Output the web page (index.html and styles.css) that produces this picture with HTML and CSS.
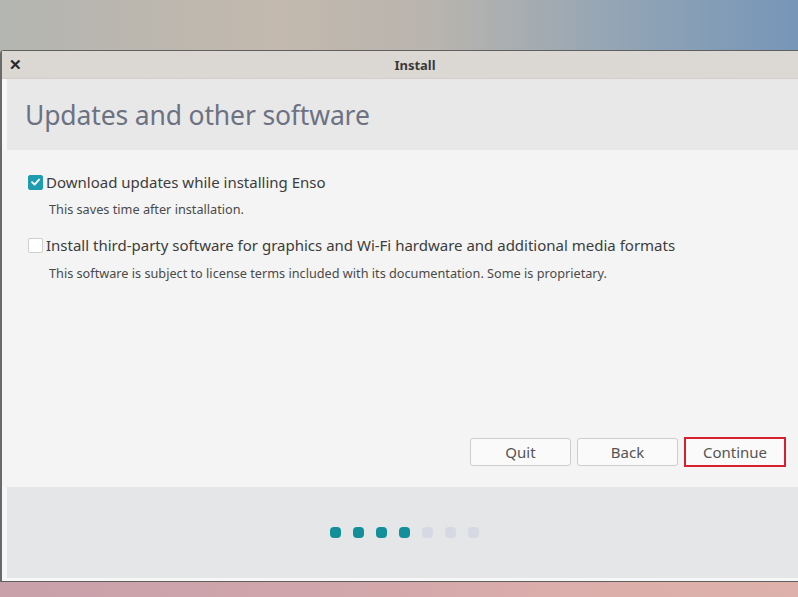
FILE: index.html
```html
<!DOCTYPE html>
<html>
<head>
<meta charset="utf-8">
<link rel="stylesheet" href="styles.css">
</head>
<body>
<div class="desktop">
  <div class="window">
    <div class="titlebar">
      <span class="close">✕</span>
      <span class="title">Install</span>
    </div>
    <div class="winbody">
      <div class="header"><h1>Updates and other software</h1></div>
      <div class="content">
        <div class="option">
          <label class="row"><span class="cb checked"><svg viewBox="0 0 14 14" width="14" height="14"><path d="M3.3 7.2 L6 9.8 L10.8 4.4" fill="none" stroke="#fff" stroke-width="2" stroke-linecap="round" stroke-linejoin="round"/></svg></span><span class="label">Download updates while installing Enso</span></label>
          <p class="desc">This saves time after installation.</p>
        </div>
        <div class="option">
          <label class="row"><span class="cb"></span><span class="label">Install third-party software for graphics and Wi-Fi hardware and additional media formats</span></label>
          <p class="desc">This software is subject to license terms included with its documentation. Some is proprietary.</p>
        </div>
        <div class="spacer"></div>
        <div class="buttons">
          <button class="btn">Quit</button>
          <button class="btn">Back</button>
          <button class="btn primary">Continue</button>
        </div>
      </div>
      <div class="footer">
        <div class="dots">
          <span class="dot on"></span><span class="dot on"></span><span class="dot on"></span><span class="dot on"></span><span class="dot"></span><span class="dot"></span><span class="dot"></span>
        </div>
      </div>
      <div class="bottomstrip"></div>
    </div>
  </div>
</div>
</body>
</html>
```

FILE: styles.css
```css
html, body {
  margin: 0;
  padding: 0;
}
body {
  width: 798px;
  height: 597px;
  overflow: hidden;
  font-family: "Noto Sans", "Open Sans", sans-serif;
}
.desktop {
  width: 798px;
  height: 597px;
  padding-top: 50px;
  box-sizing: border-box;
  background: linear-gradient(to right, #b3b5b0 0%, #c3b9ae 35%, #b8b4ae 55%, #8fa3b5 80%, #7796b8 100%);
  position: relative;
}
.desktop::after {
  content: "";
  position: absolute;
  left: 0;
  right: 0;
  bottom: 0;
  height: 40px;
  background: linear-gradient(to right, #c9a1ab 0%, #d1a6ab 40%, #dbaeab 70%, #deb2ab 100%);
  z-index: 0;
}
.window {
  position: relative;
  z-index: 1;
  height: 532px;
  box-sizing: border-box;
  border-top: 1px solid #5f5f5f;
  border-left: 2px solid #6a6a6a;
  border-bottom: 1px solid #5f5f5f;
  border-top-left-radius: 4px;
  display: flex;
  flex-direction: column;
  background: #f4f4f4;
}
.titlebar {
  height: 28px;
  flex: none;
  background: linear-gradient(to right, #dbd8d4, #dcd9d5);
  border-bottom: 1px solid #d0cdca;
  box-sizing: border-box;
  display: flex;
  align-items: center;
  position: relative;
}
.close {
  margin-left: 7px;
  font-size: 15px;
  font-weight: bold;
  color: #222;
  font-family: "DejaVu Sans", sans-serif;
  -webkit-text-stroke: 0.6px #222;
}
.title {
  position: absolute;
  left: 0;
  right: 0;
  text-align: center;
  padding-left: 30px;
  font-size: 13px;
  font-weight: bold;
  color: #3a3a3a;
  pointer-events: none;
}
.winbody {
  flex: 1;
  display: flex;
  flex-direction: column;
  background: #f7f7f7;
}
.header {
  height: 71px;
  flex: none;
  margin-left: 5px;
  background: #e8e8e9;
  display: flex;
  align-items: center;
}
.header h1 {
  margin: 0 0 0 18px;
  font-weight: normal;
  font-size: 26.5px;
  color: #6d7282;
  letter-spacing: -0.15px;
  padding-top: 1px;
}
.content {
  height: 337px;
  flex: none;
  background: #f4f4f4;
  display: flex;
  flex-direction: column;
  padding: 22px 12px 20px 26px;
  box-sizing: border-box;
}
.row {
  display: flex;
  align-items: center;
  gap: 3px;
}
.cb {
  width: 13px;
  height: 13px;
  border: 1px solid #cfcfcf;
  border-radius: 2px;
  background: #fff;
  display: flex;
  align-items: center;
  justify-content: center;
  flex: none;
}
.cb.checked {
  background: #1f9db0;
  border-color: #1f9db0;
}
.label {
  font-size: 15px;
  color: #3c3c3c;
  line-height: 20px;
}
.desc {
  margin: 9px 0 0 21px;
  font-size: 12.7px;
  color: #4a4a4a;
  line-height: 16px;
}
.option + .option {
  margin-top: 18px;
}
.option + .option .desc {
  margin-top: 10px;
}
.spacer {
  flex: 1;
}
.buttons {
  display: flex;
  justify-content: flex-end;
  gap: 6px;
}
.btn {
  width: 101px;
  height: 28px;
  font-family: "Noto Sans", "Open Sans", sans-serif;
  font-size: 15px;
  color: #555;
  background: #fafafa;
  border: 1px solid #cdcdcd;
  border-radius: 3px;
  padding: 0;
}
.btn.primary {
  border: 2px solid #d8202c;
  border-radius: 0;
  height: 30px;
  width: 102px;
  margin-top: -1px;
}
.footer {
  height: 91px;
  flex: none;
  margin-left: 5px;
  background: #e5e6e7;
  display: flex;
  align-items: center;
  justify-content: center;
}
.dots {
  display: flex;
  gap: 12px;
  margin-left: 4px;
}
.dot {
  width: 11px;
  height: 11px;
  border-radius: 4px;
  background: #d6d9e3;
}
.dot.on {
  background: #138f9a;
}
.bottomstrip {
  flex: 1;
  background: #f7f7f7;
}
```
